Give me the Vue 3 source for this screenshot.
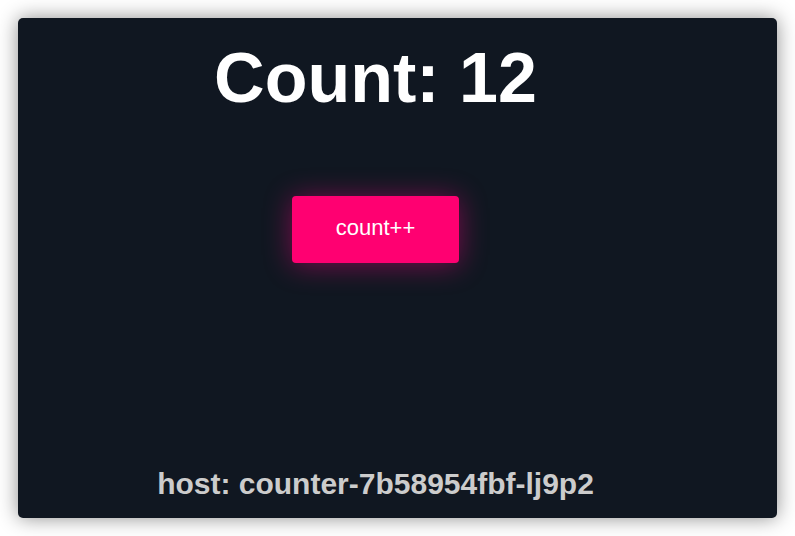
<script setup>
import { ref } from 'vue'

const count = ref(12)
const host = 'counter-7b58954fbf-lj9p2'
</script>

<template>
  <div class="page">
    <main class="window">
      <h1 class="count">Count: {{ count }}</h1>
      <button class="increment" type="button" @click="count++">count++</button>
      <h2 class="host">host: {{ host }}</h2>
    </main>
  </div>
</template>

<style>
body {
  margin: 0;
  background: #fff;
}
</style>

<style scoped>
.page {
  box-sizing: border-box;
  min-height: 100vh;
  padding: 18px;
  display: flex;
  font-family: "Liberation Sans", Arial, Helvetica, sans-serif;
}

.window {
  box-sizing: border-box;
  flex: 1;
  display: flex;
  flex-direction: column;
  align-items: center;
  padding: 20px 44px 14px 0;
  border-radius: 5px;
  background: #101721;
  box-shadow: 0 0 20px rgba(0, 0, 0, 0.45);
}

.count {
  margin: 0;
  font-size: 70px;
  line-height: 80px;
  color: #fff;
}

.increment {
  margin: 78px 0 0;
  padding: 18px 44px 22px;
  border: 0;
  border-radius: 4px;
  background: #ff0071;
  box-shadow: 0 2px 28px rgba(255, 0, 130, 0.45);
  color: #fff;
  font-family: inherit;
  font-size: 22px;
  line-height: 27px;
  cursor: pointer;
}

.host {
  margin: auto 0 0;
  font-size: 30px;
  line-height: 40px;
  color: #ccc;
}
</style>
